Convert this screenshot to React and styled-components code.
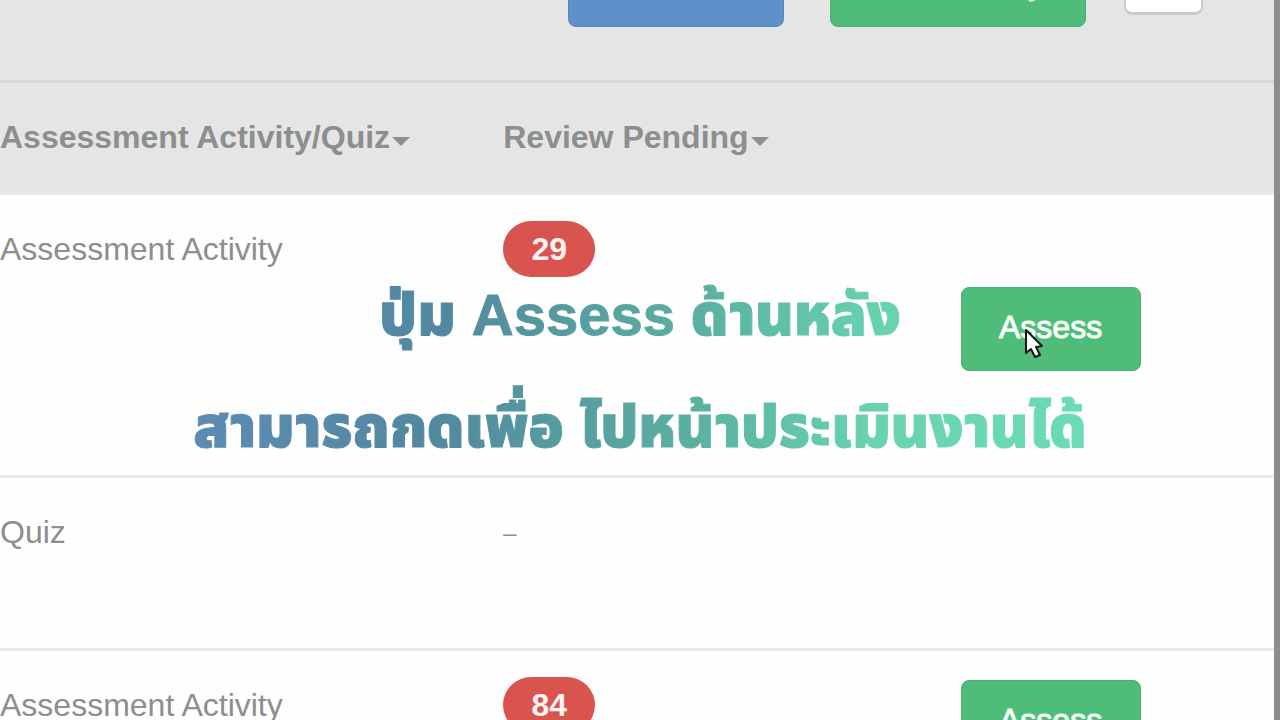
import React from "react";
import styled, { createGlobalStyle } from "styled-components";

const GlobalStyle = createGlobalStyle`
  * { box-sizing: border-box; }
  html, body { margin: 0; padding: 0; }
  body {
    overflow: hidden;
    background: #8d8d8b;
    font-family: "Liberation Sans", Arial, sans-serif;
    font-size: 32px;
    line-height: 56px;
    color: #8b8f8e;
  }
`;

const Screen = styled.main`
  position: relative;
  height: 100vh;
  overflow: hidden;
  padding-right: 6px;
`;

const Panel = styled.section`
  min-height: 100%;
  background: #fefefe;
`;

const Toolbar = styled.header`
  display: flex;
  justify-content: flex-end;
  align-items: flex-end;
  height: 83px;
  padding: 0 71px 53px 0;
  background: #e5e5e5;
  border-bottom: 3px solid #d9d9d9;
`;

const Button = styled.button`
  flex: none;
  height: 84px;
  min-width: ${(p) => p.$width || 180}px;
  padding: 0 36px 4px;
  border: 1px solid ${(p) => (p.$tone === "blue" ? "#5588c0" : "#49b271")};
  border-radius: 8px;
  background: ${(p) => (p.$tone === "blue" ? "#5e90ca" : "#4fbd79")};
  color: #f7fff9;
  font: inherit;
  line-height: 78px;
  -webkit-text-stroke: 1px currentColor;
`;

const ToolbarGroup = styled.div`
  display: flex;
  align-items: flex-end;
  gap: 46px;
  margin-right: 38px;
`;

const SquareButton = styled.button`
  flex: none;
  width: 79px;
  height: 84px;
  margin-bottom: 12px;
  border: 2px solid #cbcbcb;
  border-bottom-width: 3px;
  border-radius: 8px;
  background: #fff;
`;

const Table = styled.table`
  width: 100%;
  table-layout: fixed;
  border-collapse: separate;
  border-spacing: 0;
`;

const HeadCell = styled.th`
  width: ${(p) => p.$width};
  height: 112px;
  padding: 26px 0 0;
  vertical-align: top;
  text-align: left;
  white-space: nowrap;
  background: #e5e5e5;
  border-bottom: 3px solid #e9e9eb;
`;

const Sort = styled.button`
  display: flex;
  align-items: center;
  gap: 2px;
  padding: 0;
  border: 0;
  background: none;
  color: inherit;
  font: inherit;
`;

const Caret = styled.span`
  margin-top: 8px;
  border: 9px solid transparent;
  border-top-color: currentColor;
  border-bottom-width: 0;
`;

const Cell = styled.td`
  height: ${(p) => p.$height}px;
  padding: ${(p) => p.$top || 26}px 0 0;
  vertical-align: top;
  border-bottom: 3px solid #eaeaea;
`;

const Badge = styled.span`
  display: block;
  width: 92px;
  border-radius: 28px;
  background: #d9534f;
  color: #fff4f2;
  font-weight: bold;
  text-align: center;
`;

const Dash = styled.span`
  font-size: 24px;
  vertical-align: 2px;
`;

const Caption = styled.p`
  position: absolute;
  top: 259px;
  left: 50%;
  transform: translateX(-50%);
  margin: 0;
  white-space: nowrap;
  text-align: center;
  font-family: "Liberation Sans", "Noto Sans Thai", sans-serif;
  font-size: 58px;
  font-weight: 900;
  line-height: 112px;
  color: transparent;
  -webkit-text-stroke: 1px transparent;
  background: linear-gradient(95deg, #5e8bb5 0%, #52889f 28%, #5ab0a0 56%, #68d2b0 76%, #6cdcb5 100%);
  background-clip: text;
  pointer-events: none;
`;

const Pointer = styled.svg`
  position: absolute;
  top: 327px;
  left: 1024px;
  pointer-events: none;
`;

const rows = [
  { type: "Assessment Activity", pending: 29, height: 283, actionTop: 92 },
  { type: "Quiz", pending: null, height: 173 },
  { type: "Assessment Activity", pending: 84, height: 173, actionTop: 29 },
];

export default function App() {
  return (
    <>
      <GlobalStyle />
      <Screen>
        <Panel>
          <Toolbar>
            <ToolbarGroup>
              <Button $tone="blue" $width={216} aria-label="Export" />
              <Button $width={256}>New Activity</Button>
            </ToolbarGroup>
            <SquareButton aria-label="More" />
          </Toolbar>
          <Table>
            <thead>
              <tr>
                <HeadCell $width="39.5%">
                  <Sort>Assessment Activity/Quiz<Caret /></Sort>
                </HeadCell>
                <HeadCell $width="35.9%">
                  <Sort>Review Pending<Caret /></Sort>
                </HeadCell>
                <HeadCell />
              </tr>
            </thead>
            <tbody>
              {rows.map((row, i) => (
                <tr key={i}>
                  <Cell $height={row.height}>{row.type}</Cell>
                  <Cell $height={row.height}>
                    {row.pending ? <Badge>{row.pending}</Badge> : <Dash>–</Dash>}
                  </Cell>
                  <Cell $height={row.height} $top={row.actionTop}>
                    {row.actionTop && <Button>Assess</Button>}
                  </Cell>
                </tr>
              ))}
            </tbody>
          </Table>
        </Panel>
        <Caption>
          ปุ่ม Assess ด้านหลัง
          <br />
          สามารถกดเพื่อ ไปหน้าประเมินงานได้
        </Caption>
        <Pointer width="22" height="32" viewBox="0 0 22 32" aria-hidden="true">
          <path d="M2 3v23l5-4 4 8 5-2-4-8 6-1z" fill="#fff" stroke="#161616" strokeWidth="2" strokeLinejoin="round" />
        </Pointer>
      </Screen>
    </>
  );
}
